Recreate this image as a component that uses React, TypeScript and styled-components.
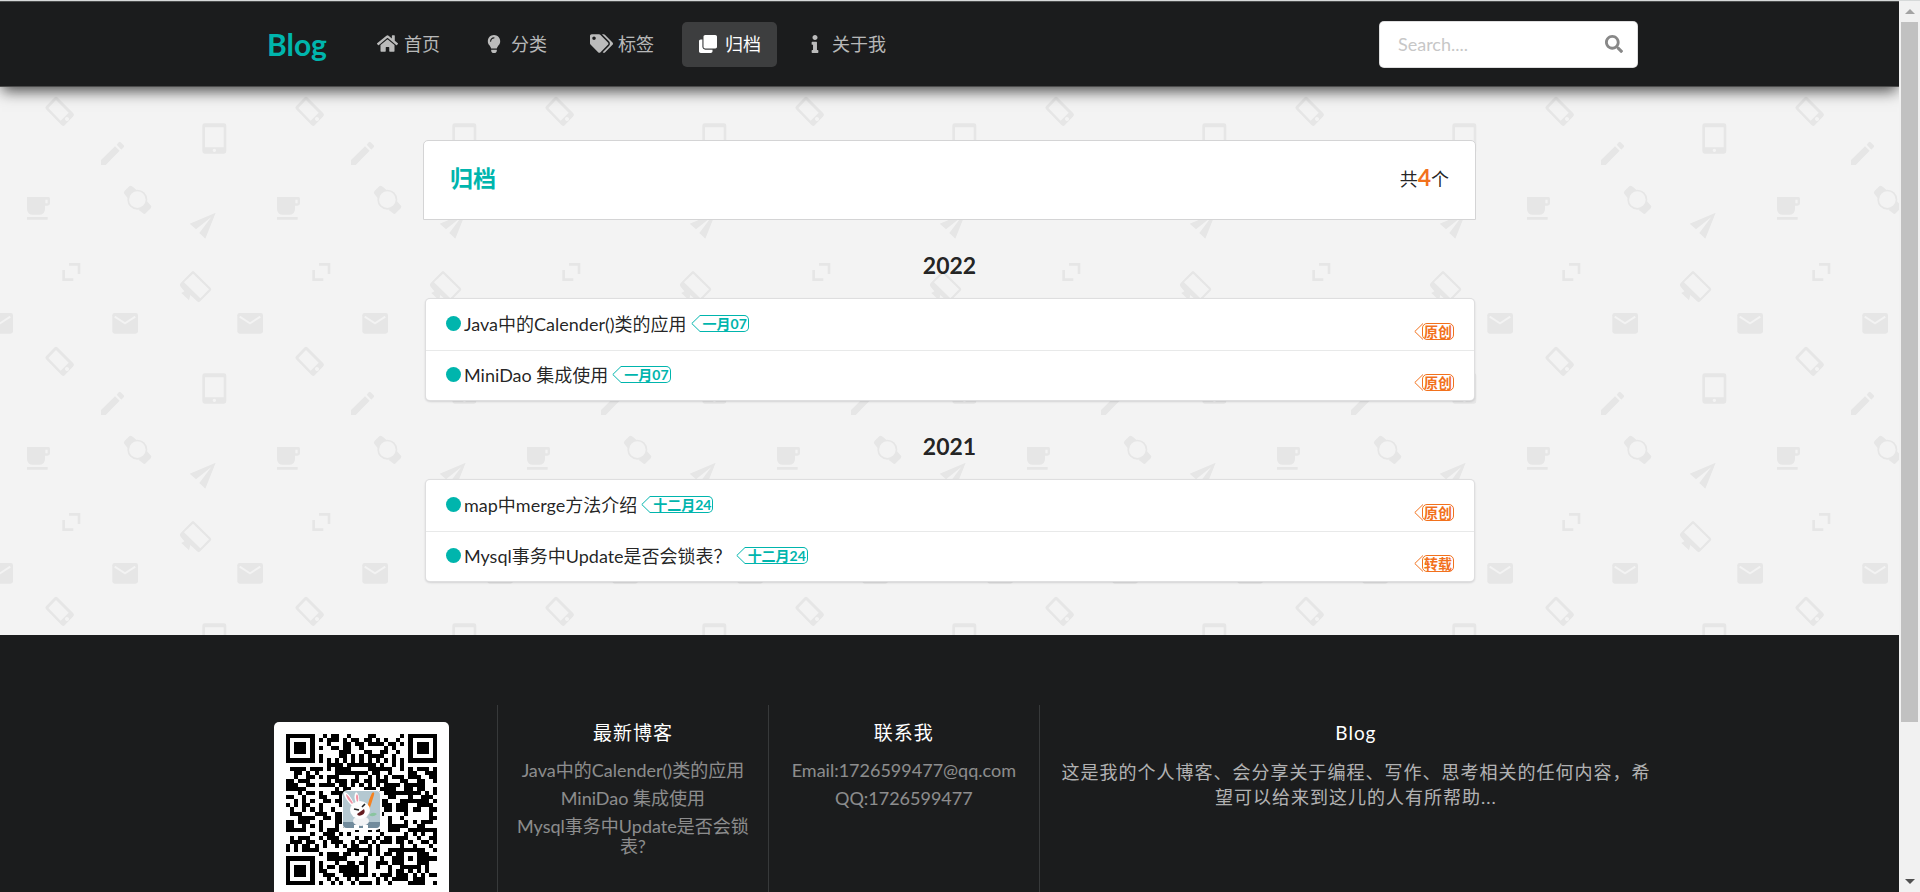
import React from 'react';
import styled, { createGlobalStyle } from 'styled-components';
import { FaClone, FaHome, FaInfo, FaLightbulb, FaSearch, FaTags } from 'react-icons/fa';

const TEAL = '#00b5ad';
const ORANGE = '#f2711c';
const INK = '#1b1c1d';

/* One 250px tile of the doodle wallpaper */
const tile = `<svg xmlns="http://www.w3.org/2000/svg" width="250" height="250" viewBox="0 33 750 750" fill="#e6e6e6">
<path fill-rule="evenodd" d="M164 52q4-4 8 0l48 48q4 5 0 9l-26 27q-4 4-9 0l-47-48q-4-5 0-9zM168 60l-23 24 37 38 24-24zM201 111a6 6 0 1 0 .1 0z"/>
<path fill-rule="evenodd" d="M614 130h58q7 0 7 7v77q0 7-7 7h-58q-7 0-7-7v-77q0-7 7-7zM615 142v60h56v-60zM643 206a5 5 0 1 0 .1 0z"/>
<path d="M303 255v-15l42-41 14 13-42 43zM350 194l6-7q3-3 6 0l9 9q3 3 0 6l-7 7z"/>
<path d="M81 351h65q4 0 4 5v12q0 9-9 9h-6v9q0 18-18 18h-18q-18 0-18-18zM81 411h62v8h-62z"/><path fill="#f3f3f3" d="M136 359h7v11h-7z"/>
<path d="M371 339l3-7 14-13q4-4 8 0l14 11-25 27zM440 362l14 17-1 5-16 16q-4 4-8 0l-13-10z"/><circle cx="412" cy="359" r="30"/><circle cx="412" cy="359" r="25" fill="#f3f3f3"/>
<path d="M569 431l78-33-31 78-18-17 36-48-46 37z"/>
<path d="M207 549h34v33h-8v-25h-26zM187 570h8v25h25v8h-33z"/>
<path fill-rule="evenodd" d="M575 575q4-4 8 0l49 49q4 4 0 8l-31 32q-5 5-10 0l-20-19-4 16-23-22 9-5-11-14q-5-6 0-11zM579 581l-27 26 49 48 26-27z"/>
<g id="m"><path d="M-31 699h63q7 0 7 7v48q0 7-7 7h-63q-7 0-7-7v-48q0-7 7-7z"/><path fill="none" stroke="#f3f3f3" stroke-width="6" d="M-31 710l31 20 31-20"/></g>
<use href="#m" x="375"/><use href="#m" x="750"/></svg>`;
const wallpaper = `url("data:image/svg+xml,${encodeURIComponent(tile)}")`;

const GlobalStyle = createGlobalStyle`
  * { box-sizing: border-box; }
  body { margin: 0; background: #f3f3f3; }
  body, input, button {
    font-family: Lato, "Noto Sans CJK SC", sans-serif;
    font-size: 18px;
    line-height: 24px;
    color: rgba(0, 0, 0, 0.87);
  }
  h1, h2, h3, h4, p, ul { margin: 0; padding: 0; }
  ul { list-style: none; }
  a { color: inherit; text-decoration: none; }
`;

const Window = styled.div`
  display: flex;
  height: 100vh;
  border-top: 1px solid #d6d9d9;
`;

const Page = styled.div`
  flex: 1;
  min-width: 0;
  overflow-x: hidden;
  overflow-y: auto;
  scrollbar-width: none;
`;

const ScrollTrack = styled.div`
  width: 21px;
  display: flex;
  flex-direction: column;
  align-items: center;
  background: #f1f1f1;
`;

const ScrollArrow = styled.span<{ $down?: boolean }>`
  height: 21px;
  display: flex;
  align-items: center;
  &::before {
    content: '';
    border: 5px solid transparent;
    border-top-width: ${(p) => (p.$down ? 5 : 0)}px;
    border-bottom-width: ${(p) => (p.$down ? 0 : 5)}px;
    border-top-color: ${(p) => (p.$down ? '#505050' : 'transparent')};
    border-bottom-color: ${(p) => (p.$down ? 'transparent' : '#a3a3a3')};
  }
`;

const ScrollLane = styled.div`
  flex: 1;
  width: 17px;
`;

const ScrollThumb = styled.div`
  height: 82.5%;
  background: #c1c1c1;
`;

const TopBar = styled.header`
  position: relative;
  z-index: 1;
  background: ${INK};
  border-top: 1px solid #4c4e4e;
  border-bottom: 1px solid #4c4c4c;
  box-shadow: 0 6px 14px -2px rgba(0, 0, 0, 0.7);
`;

const TopBarInner = styled.div`
  max-width: 1409px;
  min-height: 84px;
  margin: 0 auto;
  padding: 0 16px 0 22px;
  display: flex;
  align-items: center;
`;

const Brand = styled.h2`
  width: 94px;
  font-size: 30px;
  line-height: 38px;
  color: ${TEAL};
`;

const NavList = styled.ul`
  display: flex;
  gap: 12px;
  flex: 1;
`;

const NavLink = styled.a<{ $active?: boolean }>`
  display: flex;
  align-items: center;
  gap: 6px;
  height: 45px;
  padding: 0 16px 1px 15px;
  border-radius: 5px;
  white-space: nowrap;
  color: ${(p) => (p.$active ? '#fff' : 'rgba(255, 255, 255, 0.7)')};
  background: ${(p) => (p.$active ? '#3d3e3f' : 'transparent')};
`;

const NavIcon = styled.span`
  width: 22px;
  display: flex;
  justify-content: center;
  svg { flex: none; }
`;

const SearchBox = styled.label`
  display: flex;
  align-items: center;
  width: 259px;
  height: 47px;
  padding: 0 14px 1px 18px;
  background: #fff;
  border: 1px solid rgba(34, 36, 38, 0.15);
  border-radius: 5px;
  input {
    flex: 1;
    min-width: 0;
    padding: 0;
    border: 0;
    outline: 0;
    background: none;
  }
  input::placeholder { color: #c7c7c7; opacity: 1; }
  svg { color: #888; }
`;

const Main = styled.main`
  padding: 53px 0;
  background: #f3f3f3 ${wallpaper} 0 4px;
`;

const Container = styled.div`
  max-width: 1053px;
  margin: 0 auto;
`;

const TitleBar = styled.div`
  display: flex;
  justify-content: space-between;
  align-items: center;
  min-height: 80px;
  padding: 0 26px 4px;
  background: #fff;
  border: 1px solid #d4d4d5;
  border-radius: 5px 5px 0 0;
`;

const Title = styled.h3`
  font-size: 23px;
  line-height: 30px;
  color: ${TEAL};
`;

const Count = styled.p`
  line-height: 30px;
  strong {
    font-size: 23px;
    font-weight: 700;
    color: ${ORANGE};
  }
`;

const YearGroup = styled.section`
  padding-top: 30px;
`;

const Year = styled.h3`
  font-size: 23px;
  line-height: 30px;
  text-align: center;
`;

const PostList = styled.ul`
  margin: 18px 1px 0 2px;
  background: #fff;
  border: 1px solid rgba(34, 36, 38, 0.15);
  border-radius: 5px;
  box-shadow: 0 1px 2px rgba(34, 36, 38, 0.15);
`;

const PostRow = styled.li`
  display: flex;
  align-items: center;
  min-height: 51px;
  padding: 0 20px 2px;
  & + & {
    min-height: 50px;
    border-top: 1px solid rgba(34, 36, 38, 0.1);
  }
`;

const PostLink = styled.a`
  display: flex;
  align-items: center;
  flex: 1;
`;

const Dot = styled.span`
  width: 15px;
  height: 15px;
  margin-right: 3px;
  border-radius: 50%;
  background: ${TEAL};
`;

const Tag = styled.span<{ $color: string; $joined?: boolean }>`
  position: relative;
  height: 17px;
  margin-left: 13px;
  padding: 0 1px 0 ${(p) => (p.$joined ? 3 : 1)}px;
  border: 1px solid ${(p) => p.$color};
  border-left-width: ${(p) => (p.$joined ? 0 : 1)}px;
  border-radius: ${(p) => (p.$joined ? '0 5px 5px 0' : '5px')};
  color: ${(p) => p.$color};
  font-size: 14px;
  font-weight: 700;
  line-height: 15px;
  white-space: nowrap;
  svg {
    position: absolute;
    right: 100%;
    top: -1px;
  }
`;

const KindSlot = styled.span`
  display: flex;
  padding-top: 16px;
`;

const Footer = styled.footer`
  min-height: 444px;
  padding: 70px 0;
  background: ${INK};
  color: rgba(255, 255, 255, 0.5);
`;

const FooterGrid = styled.div`
  display: grid;
  grid-template-columns: 3fr 3fr 3fr 7fr;
  max-width: 1445px;
  min-height: 210px;
  margin: 0 auto;
`;

const FooterColumn = styled.section`
  padding: 17px;
  text-align: center;
  &:not(:last-child) { border-right: 1px solid #37393a; }
`;

const QrFrame = styled.div`
  display: inline-flex;
  padding: 12px;
  background: #fff;
  border-radius: 5px;
`;

const FooterHeading = styled.h4`
  font-size: 19px;
  line-height: 22px;
  font-weight: 400;
  letter-spacing: 1px;
  color: #fff;
`;

const FooterLinks = styled.ul`
  display: flex;
  flex-direction: column;
  gap: 8px;
  margin-top: 16px;
  line-height: 20px;
`;

const About = styled.p`
  margin-top: 16px;
  line-height: 25px;
  letter-spacing: 1px;
  color: rgba(255, 255, 255, 0.68);
`;

const Arrow = ({ color }: { color: string }) => (
  <svg width="9" height="17" viewBox="0 0 9 17" fill="none" stroke={color} aria-hidden="true">
    <path d="M9 .5 .8 8.5 9 16.5" />
  </svg>
);

const QR_SIZE = 37;

const qrModules = (): string => {
  let seed = 20220107;
  let path = '';
  const finder = (x: number, y: number) => {
    const d = Math.max(Math.abs(x - 3), Math.abs(y - 3));
    return d === 3 || d <= 1;
  };
  for (let y = 0; y < QR_SIZE; y += 1) {
    for (let x = 0; x < QR_SIZE; x += 1) {
      seed = (seed * 1103515245 + 12345) % 2147483648;
      let on = (seed >> 14) % 100 < 50;
      const fx = x > 28 ? x - 30 : x;
      const fy = y > 28 ? y - 30 : y;
      if (fx < 8 && fy < 8 && !(x > 28 && y > 28)) {
        on = fx >= 0 && fy >= 0 && fx < 7 && fy < 7 && finder(fx, fy);
      } else if (Math.abs(x - 30) <= 2 && Math.abs(y - 30) <= 2) {
        on = Math.max(Math.abs(x - 30), Math.abs(y - 30)) !== 1;
      } else if (x === 6 || y === 6) {
        on = (x + y) % 2 === 0;
      }
      if (on) path += `M${x} ${y}h1v1h-1z`;
    }
  }
  return path;
};

const QrCode = () => (
  <svg width="151" height="151" viewBox="0 0 151 151" role="img" aria-label="QR">
    <path d={qrModules()} transform="scale(4.081)" shapeRendering="crispEdges" />
    <rect x="56" y="56" width="40" height="40" rx="6" fill="#fff" />
    <rect x="57" y="57" width="37" height="37" rx="4" fill="#b4c8d1" />
    <path d="M57 88h37v2q0 4-4 4H61q-4 0-4-4z" fill="#718b9c" />
    <path d="M86 59q3-2 2 2l-6 19q-2-9 4-21z" fill="#f58220" />
    <path d="M83 81q4-4 8-1-4 4-8 1z" fill="#8ac5a0" />
    <path d="M66 72q-9-9-8-14 5 0 10 12zM70 70q-3-9 0-12 4 2 3 12z" fill="#fff" />
    <path d="M66 70q-6-6-6-10 3 2 7 9zM71 68q-2-6 0-8 2 2 1 8z" fill="#f493a4" />
    <ellipse cx="75" cy="87" rx="8" ry="5" fill="#f2f3f5" />
    <ellipse cx="74" cy="76" rx="10" ry="9" fill="#fdfdfe" />
    <path d="M68 91h5v3h-5zM77 91h5v3h-5z" fill="#fff" />
    <path d="M68 75l5 1M76 73l3-3" stroke="#222" strokeWidth="1.6" />
    <path d="M71 80l7-5q2 4-2 6t-5-1z" fill="#641c20" />
  </svg>
);

const navItems = [
  { label: '首页', icon: <FaHome size={21} /> },
  { label: '分类', icon: <FaLightbulb size={18} /> },
  { label: '标签', icon: <FaTags size={23} /> },
  { label: '归档', icon: <FaClone size={18} />, active: true },
  { label: '关于我', icon: <FaInfo size={18} /> },
];

const archive = [
  {
    year: '2022',
    posts: [
      { title: 'Java中的Calender()类的应用', date: '一月07', kind: '原创' },
      { title: 'MiniDao 集成使用', date: '一月07', kind: '原创' },
    ],
  },
  {
    year: '2021',
    posts: [
      { title: 'map中merge方法介绍', date: '十二月24', kind: '原创' },
      { title: 'Mysql事务中Update是否会锁表？', date: '十二月24', kind: '转载' },
    ],
  },
];

const latest = ['Java中的Calender()类的应用', 'MiniDao 集成使用', 'Mysql事务中Update是否会锁表?'];

export default function App() {
  return (
    <Window>
      <GlobalStyle />
      <Page>
        <TopBar>
          <TopBarInner>
            <Brand>Blog</Brand>
            <NavList>
              {navItems.map((item) => (
                <li key={item.label}>
                  <NavLink href="#" $active={item.active}>
                    <NavIcon>{item.icon}</NavIcon>
                    {item.label}
                  </NavLink>
                </li>
              ))}
            </NavList>
            <SearchBox>
              <input type="text" placeholder="Search...." aria-label="Search" />
              <FaSearch size={18} />
            </SearchBox>
          </TopBarInner>
        </TopBar>
        <Main>
          <Container>
            <TitleBar>
              <Title>归档</Title>
              <Count>
                共<strong>4</strong>个
              </Count>
            </TitleBar>
            {archive.map((group) => (
              <YearGroup key={group.year}>
                <Year>{group.year}</Year>
                <PostList>
                  {group.posts.map((post) => (
                    <PostRow key={post.title}>
                      <PostLink href="#">
                        <Dot />
                        {post.title}
                        <Tag $color={TEAL} $joined>
                          <Arrow color={TEAL} />
                          {post.date}
                        </Tag>
                      </PostLink>
                      <KindSlot>
                        <Tag $color={ORANGE}>
                          <Arrow color={ORANGE} />
                          {post.kind}
                        </Tag>
                      </KindSlot>
                    </PostRow>
                  ))}
                </PostList>
              </YearGroup>
            ))}
          </Container>
        </Main>
        <Footer>
          <FooterGrid>
            <FooterColumn>
              <QrFrame>
                <QrCode />
              </QrFrame>
            </FooterColumn>
            <FooterColumn>
              <FooterHeading>最新博客</FooterHeading>
              <FooterLinks>
                {latest.map((title) => (
                  <li key={title}>
                    <a href="#">{title}</a>
                  </li>
                ))}
              </FooterLinks>
            </FooterColumn>
            <FooterColumn>
              <FooterHeading>联系我</FooterHeading>
              <FooterLinks>
                <li>Email:1726599477@qq.com</li>
                <li>QQ:1726599477</li>
              </FooterLinks>
            </FooterColumn>
            <FooterColumn>
              <FooterHeading>Blog</FooterHeading>
              <About>这是我的个人博客、会分享关于编程、写作、思考相关的任何内容，希望可以给来到这儿的人有所帮助...</About>
            </FooterColumn>
          </FooterGrid>
        </Footer>
      </Page>
      <ScrollTrack aria-hidden="true">
        <ScrollArrow />
        <ScrollLane>
          <ScrollThumb />
        </ScrollLane>
        <ScrollArrow $down />
      </ScrollTrack>
    </Window>
  );
}
